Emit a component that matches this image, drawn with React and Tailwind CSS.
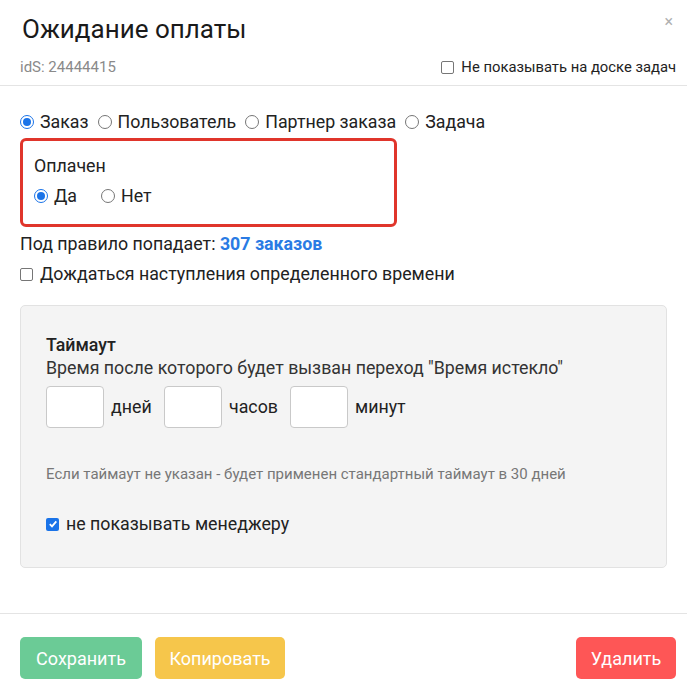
import React from 'react'

const Radio = ({ checked, label, className = '' }) => (
  <label className={`flex items-center gap-[6px] ${className}`}>
    <span
      className={`w-[14px] h-[14px] rounded-full flex items-center justify-center ${
        checked ? 'border-[1.5px] border-[#1a73e8] bg-white' : 'border border-[#767676] bg-white'
      }`}
    >
      {checked && <span className="w-[8px] h-[8px] rounded-full bg-[#1a73e8]" />}
    </span>
    <span>{label}</span>
  </label>
)

const Checkbox = ({ checked }) =>
  checked ? (
    <span className="w-[13px] h-[13px] rounded-[2px] bg-[#1a73e8] flex items-center justify-center">
      <svg width="10" height="10" viewBox="0 0 10 10">
        <path d="M1.8 5.2 L4 7.4 L8.3 2.4" stroke="white" strokeWidth="1.8" fill="none" />
      </svg>
    </span>
  ) : (
    <span className="w-[13px] h-[13px] rounded-[2px] border border-[#767676] bg-white" />
  )

export default function App() {
  return (
    <div className="w-[687px] h-[691px] bg-white text-[#222] font-['Roboto',sans-serif] relative">
      <div className="absolute right-[14px] top-[10px] text-[#b0b0b0] text-[16px]">×</div>
      <div className="px-[22px] pt-[12px]">
        <h1 className="text-[26px] leading-[34px] text-[#1a1a1a]">Ожидание оплаты</h1>
      </div>
      <div className="flex items-center justify-between pl-[20px] pr-[11px] mt-[10px] h-[22px] text-[15px]">
        <span className="text-[#8a8a8a]">idS: 24444415</span>
        <label className="flex items-center gap-[7px] text-[#222] text-[14.8px]">
          <Checkbox />
          Не показывать на доске задач
        </label>
      </div>
      <div className="border-b border-[#e4e4e4] mt-[7px]" />

      <div className="px-[20px] pt-[25px] text-[17.8px]">
        <div className="flex items-center gap-[9px] h-[22px]">
          <Radio checked label="Заказ" />
          <Radio label="Пользователь" />
          <Radio label="Партнер заказа" />
          <Radio label="Задача" />
        </div>
        <div className="mt-[5px] w-[377px] h-[89px] border-[3px] border-[#e0352b] rounded-[6px] px-[11px] pt-[14px]">
          <div className="h-[22px] leading-[22px]">Оплачен</div>
          <div className="flex items-center gap-[24px] mt-[8px] h-[22px]">
            <Radio checked label="Да" />
            <Radio label="Нет" />
          </div>
        </div>
        <div className="mt-[6px] h-[22px] leading-[22px]">
          Под правило попадает: <span className="text-[#2a7be4] font-bold">307 заказов</span>
        </div>
        <label className="flex items-center gap-[7px] mt-[8px] h-[22px]">
          <Checkbox />
          Дождаться наступления определенного времени
        </label>

        <div className="mt-[20px] h-[263px] bg-[#f4f4f4] border border-[#e2e2e2] rounded-[5px] px-[25px] pt-[27px]">
          <div className="font-medium h-[24px] leading-[24px]">Таймаут</div>
          <div className="h-[22px] leading-[22px] text-[#333]">
            Время после которого будет вызван переход "Время истекло"
          </div>
          <div className="flex items-center mt-[7px] h-[42px]">
            <div className="w-[58px] h-[42px] bg-white border border-[#c9c9c9] rounded-[4px]" />
            <span className="ml-[7px] w-[53px]">дней</span>
            <div className="w-[58px] h-[42px] bg-white border border-[#c9c9c9] rounded-[4px]" />
            <span className="ml-[7px] w-[61px]">часов</span>
            <div className="w-[58px] h-[42px] bg-white border border-[#c9c9c9] rounded-[4px]" />
            <span className="ml-[7px]">минут</span>
          </div>
          <div className="mt-[36px] text-[15px] text-[#777] h-[20px] leading-[20px]">
            Если таймаут не указан - будет применен стандартный таймаут в 30 дней
          </div>
          <label className="flex items-center gap-[7px] mt-[29px] h-[22px]">
            <Checkbox checked />
            не показывать менеджеру
          </label>
        </div>
      </div>

      <div className="border-b border-[#e4e4e4] mt-[45px]" />
      <div className="flex items-center px-[11px] pl-[20px] mt-[23px] text-white text-[18px]">
        <button className="w-[122px] h-[42px] rounded-[5px] bg-[#6bcb96]">Сохранить</button>
        <button className="ml-[13px] w-[130px] h-[42px] rounded-[5px] bg-[#f6c64b]">Копировать</button>
        <button className="ml-auto w-[100px] h-[42px] rounded-[5px] bg-[#fe5656]">Удалить</button>
      </div>
    </div>
  )
}
